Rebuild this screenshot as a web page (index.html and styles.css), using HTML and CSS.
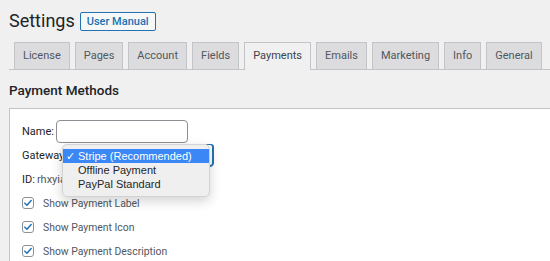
FILE: index.html
```html
<!DOCTYPE html>
<html lang="en">
<head>
  <meta charset="UTF-8" />
  <meta name="viewport" content="width=device-width, initial-scale=1" />
  <title>Settings</title>
  <link rel="stylesheet" href="styles.css">
</head>
<body>

  <div class="wrap">
    <div class="page-head">
      <h1>Settings</h1>
      <a class="head-btn" href="#">User Manual</a>
    </div>

    <nav class="tabs">
      <a class="tab" href="#">License</a>
      <a class="tab" href="#">Pages</a>
      <a class="tab" href="#">Account</a>
      <a class="tab" href="#">Fields</a>
      <a class="tab active" href="#">Payments</a>
      <a class="tab" href="#">Emails</a>
      <a class="tab" href="#">Marketing</a>
      <a class="tab" href="#">Info</a>
      <a class="tab" href="#">General</a>
    </nav>

    <h2 class="section-title">Payment Methods</h2>

    <div class="panel">
      <div class="field-row">
        <label class="field-label">Name:</label>
        <input class="text-input" type="text" />
      </div>

      <div class="field-row gateway-row">
        <label class="field-label">Gateway:</label>
        <div class="select-box"></div>

        <ul class="dropdown">
          <li class="selected"><span class="tick">✓</span>Stripe (Recommended)</li>
          <li>Offline Payment</li>
          <li>PayPal Standard</li>
        </ul>
      </div>

      <div class="field-row">
        <span class="field-label">ID:</span>
        <span class="id-value">rhxyia8k</span>
      </div>

      <label class="check-row">
        <span class="checkbox">
          <svg viewBox="0 0 12 12" width="10" height="10"><path d="M2.2 6.2 L4.8 8.8 L9.8 3" fill="none" stroke="#2271b1" stroke-width="1.8" stroke-linecap="round" stroke-linejoin="round"/></svg>
        </span>
        Show Payment Label
      </label>
      <label class="check-row">
        <span class="checkbox">
          <svg viewBox="0 0 12 12" width="10" height="10"><path d="M2.2 6.2 L4.8 8.8 L9.8 3" fill="none" stroke="#2271b1" stroke-width="1.8" stroke-linecap="round" stroke-linejoin="round"/></svg>
        </span>
        Show Payment Icon
      </label>
      <label class="check-row">
        <span class="checkbox">
          <svg viewBox="0 0 12 12" width="10" height="10"><path d="M2.2 6.2 L4.8 8.8 L9.8 3" fill="none" stroke="#2271b1" stroke-width="1.8" stroke-linecap="round" stroke-linejoin="round"/></svg>
        </span>
        Show Payment Description
      </label>
    </div>
  </div>

</body>
</html>
```

FILE: styles.css
```css
body {
  margin: 0;
  padding: 0;
  background: #f0f0f1;
  font-family: Roboto, "Liberation Sans", sans-serif;
  font-size: 12px;
  color: #1d2327;
  overflow: hidden;
}

.wrap {
  padding-left: 9px;
}

.page-head {
  display: flex;
  align-items: center;
  gap: 5px;
  height: 20px;
  margin-top: 11px;
}

.page-head h1 {
  margin: 0;
  font-size: 18px;
  font-weight: 400;
  line-height: 20px;
}

.head-btn {
  display: inline-block;
  height: 17px;
  line-height: 17px;
  padding: 0 6px;
  border: 1px solid #2271b1;
  border-radius: 2px;
  background: #f6f7f7;
  color: #2271b1;
  font-size: 11px;
  font-weight: 500;
  text-decoration: none;
}

.tabs {
  display: flex;
  gap: 5px;
  margin-top: 11px;
  padding-left: 5px;
  border-bottom: 1px solid #c3c4c7;
}

.tab {
  display: block;
  height: 26px;
  line-height: 26px;
  padding: 0 8px;
  margin-bottom: -1px;
  border: 1px solid #c3c4c7;
  border-bottom: none;
  background: #dcdcde;
  color: #50575e;
  font-size: 11px;
  font-weight: 400;
  text-decoration: none;
}

.tab.active {
  background: #f0f0f1;
  color: #3c434a;
  height: 27px;
}

.section-title {
  margin: 13px 0 11px;
  font-size: 13.5px;
  font-weight: 500;
  line-height: 14px;
}

.panel {
  background: #fff;
  border-top: 1px solid #c3c4c7;
  border-left: 1px solid #c3c4c7;
  padding: 10px 12px 0;
  height: 200px;
}

.field-row {
  display: flex;
  align-items: center;
  gap: 2px;
  height: 24px;
}

.field-label {
  font-size: 11px;
  font-weight: 400;
  color: #1d2327;
}

.id-value {
  font-size: 11px;
  color: #50575e;
}

.text-input {
  width: 132px;
  height: 23px;
  box-sizing: border-box;
  margin: 0;
  border: 1px solid #8c8f94;
  border-radius: 4px;
  background: #fff;
}

.gateway-row {
  position: relative;
}

.select-box {
  width: 141px;
  height: 22px;
  box-sizing: border-box;
  margin-left: 3px;
  border: 1px solid #2271b1;
  border-radius: 3px;
  box-shadow: 1px 0 0 #2271b1, 0 1px 0 #2271b1;
  background: #fff;
}

.dropdown {
  position: absolute;
  left: 40px;
  top: 1px;
  width: 148px;
  margin: 0;
  padding: 4px 0 5px;
  list-style: none;
  box-sizing: border-box;
  background: #efefef;
  border: 1px solid #d2d2d2;
  border-radius: 5px;
  box-shadow: 0 4px 12px rgba(0, 0, 0, 0.18);
  font-family: "Liberation Sans", Arial, sans-serif;
  font-size: 11px;
  color: #262626;
}

.dropdown li {
  height: 14px;
  line-height: 14px;
  padding-left: 15px;
  position: relative;
}

.dropdown li.selected {
  background: #3a87f5;
  color: #fff;
}

.dropdown .tick {
  position: absolute;
  left: 3px;
  top: 0;
}

.check-row {
  display: flex;
  align-items: center;
  gap: 9px;
  height: 24px;
  color: #50575e;
  font-size: 10.4px;
}

.checkbox {
  display: flex;
  align-items: center;
  justify-content: center;
  width: 12px;
  height: 12px;
  box-sizing: border-box;
  border: 1px solid #8c8f94;
  border-radius: 3px;
  background: #fff;
}
```
